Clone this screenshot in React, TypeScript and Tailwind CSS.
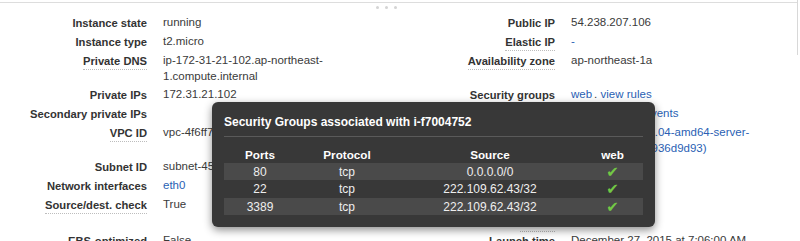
import type { ReactNode } from 'react';

type Detail = {
  label: string;
  value?: ReactNode;
  tip?: boolean;
  h: string;
};

const link = 'text-[#2a5fb4]';

const leftRows: Detail[] = [
  { label: 'Instance state', value: 'running', h: 'h-[19px]' },
  { label: 'Instance type', value: 't2.micro', h: 'h-[19px]' },
  {
    label: 'Private DNS',
    tip: true,
    value: (
      <>
        ip-172-31-21-102.ap-northeast-
        <br />
        1.compute.internal
      </>
    ),
    h: 'h-[34px]',
  },
  { label: 'Private IPs', value: '172.31.21.102', h: 'h-[19px]' },
  { label: 'Secondary private IPs', h: 'h-[19px]' },
  { label: 'VPC ID', tip: true, value: 'vpc-4f6ff72b', h: 'h-[34px]' },
  { label: 'Subnet ID', value: 'subnet-45c8e21c', h: 'h-[19px]' },
  { label: 'Network interfaces', value: <span className={link}>eth0</span>, h: 'h-[19px]' },
  { label: 'Source/dest. check', tip: true, value: 'True', h: 'h-[36px]' },
  { label: 'EBS-optimized', value: 'False', h: 'h-[19px]' },
];

const rightRows: Detail[] = [
  { label: 'Public IP', value: '54.238.207.106', h: 'h-[19px]' },
  { label: 'Elastic IP', tip: true, value: <span className={link}>-</span>, h: 'h-[19px]' },
  { label: 'Availability zone', tip: true, value: 'ap-northeast-1a', h: 'h-[34px]' },
  {
    label: 'Security groups',
    value: (
      <>
        <span className={link}>web</span>
        <span className="ml-[2px]">.</span> <span className={link}>view rules</span>
      </>
    ),
    h: 'h-[19px]',
  },
  { label: 'Scheduled events', tip: true, value: <span className={link}>No scheduled events</span>, h: 'h-[19px]' },
  {
    label: 'AMI ID',
    value: (
      <span className={link}>
        ubuntu-trusty-14.04-amd64-server-
        <br />
        20151218 (ami-936d9d93)
      </span>
    ),
    h: 'h-[34px]',
  },
  { label: 'Platform', value: '-', h: 'h-[19px]' },
  { label: 'IAM role', value: '-', h: 'h-[19px]' },
  { label: 'Key pair name', value: 'mykey', h: 'h-[18px]' },
  { label: 'Owner', tip: true, value: '338712305937', h: 'h-[18px]' },
  { label: 'Launch time', value: 'December 27, 2015 at 7:06:00 AM', h: 'h-[19px]' },
];

const rules = [
  { port: '80', source: '0.0.0.0/0', h: 'h-[17px]', bg: 'bg-[#4a4a4a]' },
  { port: '22', source: '222.109.62.43/32', h: 'h-[18px]', bg: '' },
  { port: '3389', source: '222.109.62.43/32', h: 'h-[17px]', bg: 'bg-[#4a4a4a]' },
];

function DetailColumn({ rows, labelWidth }: { rows: Detail[]; labelWidth: string }) {
  return (
    <div className="flex flex-col">
      {rows.map((r) => (
        <div key={r.label} className={`flex items-start gap-4 pt-[1.5px] leading-4 ${r.h}`}>
          <div className={`${labelWidth} shrink-0 text-right`}>
            <span
              className={`text-[11.2px] font-bold text-[#333] ${
                r.tip ? 'border-b border-dotted border-[#bdbdbd] pb-[2px]' : ''
              }`}
            >
              {r.label}
            </span>
          </div>
          <div className="text-[11.5px] text-[#3a3a3a] whitespace-nowrap">{r.value}</div>
        </div>
      ))}
    </div>
  );
}

function RulesPopover() {
  return (
    <div className="absolute left-[212px] top-[102px] w-[443px] rounded-[6px] bg-[#383838] px-3 pt-3 pb-3 shadow-[0_3px_8px_rgba(0,0,0,0.45)]">
      <div className="text-[12px] font-bold leading-4 text-white">
        Security Groups associated with i-f7004752
      </div>
      <div className="mt-[6px] h-px bg-[#5a5a5a]" />
      <div className="mt-[9px] grid h-[17px] grid-cols-[72px_102px_184px_61px] items-center text-center text-[11.7px] font-bold text-white">
        <span>Ports</span>
        <span>Protocol</span>
        <span>Source</span>
        <span>web</span>
      </div>
      {rules.map((r) => (
        <div
          key={r.port}
          className={`grid grid-cols-[72px_102px_184px_61px] items-center text-center text-[12px] text-[#eeeeee] ${r.h} ${r.bg}`}
        >
          <span>{r.port}</span>
          <span>tcp</span>
          <span>{r.source}</span>
          <span className="font-['DejaVu_Sans',sans-serif] text-[15px] leading-none text-[#72c845]">✔</span>
        </div>
      ))}
    </div>
  );
}

export default function App() {
  return (
    <div className="relative h-[241px] w-[800px] overflow-hidden bg-white font-['Liberation_Sans',Arial,sans-serif]">
      <div className="h-[2px]" />
      <div className="mr-[3px] h-px bg-[#dddddd]" />
      <div className="flex h-[9px] items-center gap-[6px] pl-[376px]">
        <span className="h-[3px] w-[3px] rounded-full bg-[#d4d4d4]" />
        <span className="h-[3px] w-[3px] rounded-full bg-[#d4d4d4]" />
        <span className="h-[3px] w-[3px] rounded-full bg-[#d4d4d4]" />
      </div>
      <div className="grid grid-cols-[400px_400px]">
        <DetailColumn rows={leftRows} labelWidth="w-[147px]" />
        <DetailColumn rows={rightRows} labelWidth="w-[155px]" />
      </div>
      <div className="absolute right-[2px] top-0 h-[55px] w-px bg-[#d8d8d8]" />
      <RulesPopover />
    </div>
  );
}
